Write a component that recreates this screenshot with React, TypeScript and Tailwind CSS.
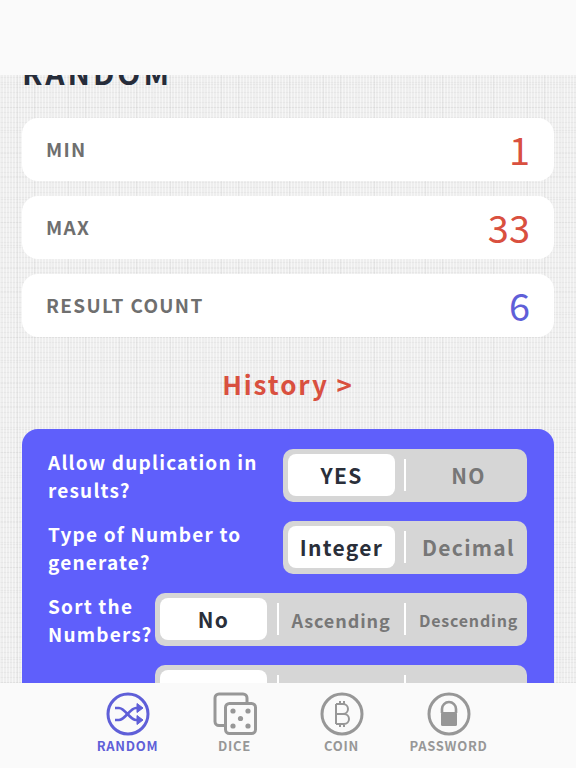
const font = "font-['Noto_Sans_CJK_SC','Noto_Sans',sans-serif]";

function Card({ label, value, color }: { label: string; value: string; color: string }) {
  return (
    <div className="flex h-[63px] items-center justify-between rounded-2xl bg-white px-6">
      <span className="text-[19px] font-bold tracking-[1.3px] text-[#6f6f6f]">{label}</span>
      <span className={`pb-0.5 text-[38px] leading-none ${color}`}>{value}</span>
    </div>
  );
}

function Segment({ options, small }: { options: string[]; small?: boolean }) {
  return (
    <div className="flex h-[53px] flex-1 items-center justify-between rounded-[10px] bg-[#d6d6d6] px-[5px]">
      {options.map((o, i) => (
        <div key={o} className="flex items-center gap-[9px]">
          {i > 0 && <div className="h-8 w-0.5 bg-white" />}
          <div
            className={
              i === 0
                ? "flex h-[42px] w-[107px] items-center justify-center rounded-lg bg-white pt-0.5 text-[21px] font-bold tracking-[1.3px] text-[#2a2f3a]"
                : `flex h-[42px] w-[107px] items-center justify-center whitespace-nowrap pt-0.5 font-bold text-[#777] ${
                    small && i === 2 ? "text-[16px] tracking-[0.8px]" : small ? "text-[18px] tracking-[0.9px]" : "text-[21px] tracking-[1.3px]"
                  }`
            }
          >
            {o}
          </div>
        </div>
      ))}
    </div>
  );
}

function Row({ label, options, small }: { label: string; options: string[]; small?: boolean }) {
  return (
    <div className="flex h-14 items-center gap-[3px]">
      <div className={`${small ? "w-[104px]" : "w-[232px]"} shrink-0 pt-0.5 text-[19px] font-bold leading-7 tracking-[1.2px] text-white`}>
        {label}
      </div>
      <Segment options={options} small={small} />
    </div>
  );
}

function Tab({ label, active, children }: { label: string; active?: boolean; children: React.ReactNode }) {
  return (
    <div className="flex w-[107px] flex-col items-center">
      {children}
      <span className={`mt-0.5 text-[13px] font-bold leading-4 tracking-[0.7px] ${active ? "text-[#5f5fd8]" : "text-[#979797]"}`}>
        {label}
      </span>
    </div>
  );
}

export default function App() {
  return (
    <div className={`flex h-[768px] w-[576px] flex-col overflow-hidden bg-[#fafafa] ${font}`}>
      <div className="h-[75px] shrink-0 bg-[#fafafa]" />

      <main className="min-h-0 flex-1 overflow-hidden bg-[#eeeeee] bg-[repeating-linear-gradient(90deg,rgba(255,255,255,0.5)_0px,rgba(255,255,255,0.5)_1px,transparent_1px,transparent_3px),repeating-linear-gradient(90deg,rgba(185,185,185,0.16)_0px,rgba(185,185,185,0.16)_1px,transparent_1px,transparent_17px),repeating-linear-gradient(0deg,rgba(200,200,200,0.2)_0px,rgba(200,200,200,0.2)_1px,transparent_1px,transparent_5px),repeating-linear-gradient(0deg,rgba(175,175,175,0.12)_0px,rgba(175,175,175,0.12)_1px,transparent_1px,transparent_23px)] px-[22px]">
        <h1 className="-mt-[16px] text-[30px] font-bold leading-[27px] tracking-[3px] text-[#262c3a]">RANDOM</h1>

        <div className="mt-[32px] flex flex-col gap-[15px]">
          <Card label="MIN" value="1" color="text-[#d9503f]" />
          <Card label="MAX" value="33" color="text-[#d9503f]" />
          <Card label="RESULT COUNT" value="6" color="text-[#5f5fd8]" />
        </div>

        <div className="mt-[27px] text-center text-[26px] font-bold leading-10 tracking-[1.9px] text-[#d9503f]">History &gt;</div>

        <section className="mt-[25px] flex flex-col gap-4 rounded-t-2xl bg-[#5f5ffb] pb-6 pl-[26px] pr-[27px] pt-[18px]">
          <Row label="Allow duplication in results?" options={["YES", "NO"]} />
          <Row label="Type of Number to generate?" options={["Integer", "Decimal"]} />
          <Row label="Sort the Numbers?" options={["No", "Ascending", "Descending"]} small />
          <Row label="" options={["No", "Ascending", "Descending"]} small />
        </section>
      </main>

      <nav className="flex h-[85px] shrink-0 items-start justify-center bg-[#fafafa] pt-[9px]">
        <Tab label="RANDOM" active>
          <svg width="44" height="44" viewBox="0 0 44 44" fill="none" stroke="#5f5fd8" strokeWidth="3">
            <circle cx="22" cy="22" r="20" />
            <path d="M9 16h4c6 0 11 12 17 12h3M9 28h4c6 0 11-12 17-12h3" strokeWidth="2.6" />
            <path d="M31 11.5l6 4.5-6 4.5zM31 23.5l6 4.5-6 4.5z" fill="#5f5fd8" strokeWidth="1" />
          </svg>
        </Tab>
        <Tab label="DICE">
          <svg width="44" height="44" viewBox="0 0 44 44" fill="none" stroke="#979797" strokeWidth="3">
            <path d="M11 33.5H6a4 4 0 0 1-4-4V6a4 4 0 0 1 4-4h24a4 4 0 0 1 4 4v5" />
            <rect x="12.5" y="11.5" width="30" height="30" rx="4" />
            <g fill="#979797" stroke="none">
              <circle cx="20" cy="19" r="2.6" />
              <circle cx="35" cy="19" r="2.6" />
              <circle cx="27.5" cy="26.5" r="2.6" />
              <circle cx="20" cy="34" r="2.6" />
              <circle cx="35" cy="34" r="2.6" />
            </g>
          </svg>
        </Tab>
        <Tab label="COIN">
          <svg width="44" height="44" viewBox="0 0 44 44" fill="none" stroke="#979797" strokeWidth="3">
            <circle cx="22" cy="22" r="20" />
            <path d="M16 12v20M16 12h7a5 5 0 0 1 0 10h-7M16 22h8a5 5 0 0 1 0 10h-8M20 9v3M24 9v3M20 32v3M24 32v3" strokeWidth="2" />
          </svg>
        </Tab>
        <Tab label="PASSWORD">
          <svg width="44" height="44" viewBox="0 0 44 44" fill="none" stroke="#979797" strokeWidth="3">
            <circle cx="22" cy="22" r="20" />
            <path d="M15 21v-4a7 7 0 0 1 14 0v4" strokeWidth="2.6" />
            <rect x="14" y="20" width="16" height="14" rx="1.5" fill="#979797" stroke="none" />
          </svg>
        </Tab>
      </nav>
    </div>
  );
}
